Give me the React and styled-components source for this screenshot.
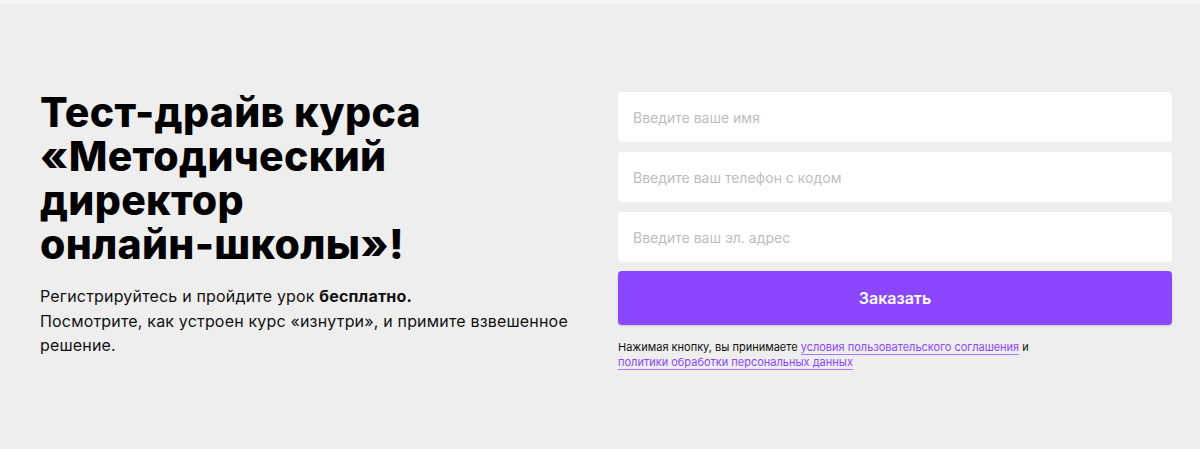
import styled, { createGlobalStyle } from 'styled-components';

const Global = createGlobalStyle`
    body {
        margin: 0;
        background: #eeeeee;
        font-family: Inter, "Noto Sans", sans-serif;
    }
`

const TopStrip = styled.div`
    height: 4px;
    background: #f6f6f6;
`

const Section = styled.section`
    display: grid;
    grid-template-columns: 1fr 554px;
    column-gap: 38px;
    align-items: start;
    padding: 86px 28px 78px 40px;
    background: #eeeeee;
`

const Intro = styled.div``

const Heading = styled.h1`
    margin: 0 0 18px;
    font-size: 41px;
    line-height: 44px;
    font-weight: 800;
    color: #000;
    letter-spacing: 0.3px;
`

const Lead = styled.p`
    margin: 0;
    font-size: 16px;
    line-height: 24.5px;
    letter-spacing: 0.18px;
    color: #111;
    b {
        font-weight: 700;
    }
`

const Form = styled.form`
    display: flex;
    flex-direction: column;
    gap: 10px;
    padding-top: 2px;
`

const Input = styled.input`
    box-sizing: border-box;
    height: 50px;
    width: 100%;
    border: none;
    border-radius: 4px;
    background: #fff;
    padding: 0 15px;
    font-family: inherit;
    font-size: 14px;
    color: #222;
    outline: none;
    &::placeholder {
        color: #bdbdbd;
    }
`

const Button = styled.button`
    height: 54px;
    margin-top: -1px;
    border: none;
    border-radius: 4px;
    background: #8b47ff;
    color: #fff;
    font-family: inherit;
    font-size: 16px;
    font-weight: 600;
    box-shadow: 0 1px 2px rgba(0, 0, 0, 0.15);
    cursor: pointer;
`

const Note = styled.p`
    margin: 5px 0 0;
    font-size: 11px;
    line-height: 15px;
    color: #111;
`

const Link = styled.a`
    color: #8b47ff;
    text-decoration: none;
    border-bottom: 1px solid #a77bff;
`

function App() {
    return (
        <>
            <Global />
            <TopStrip />
            <Section>
                <Intro>
                    <Heading>
                        Тест-драйв курса<br />
                        «Методический<br />
                        директор<br />
                        онлайн-школы»!
                    </Heading>
                    <Lead>
                        Регистрируйтесь и пройдите урок <b>бесплатно.</b><br />
                        Посмотрите, как устроен курс «изнутри», и примите взвешенное решение.
                    </Lead>
                </Intro>
                <Form onSubmit={(e) => e.preventDefault()}>
                    <Input placeholder="Введите ваше имя" />
                    <Input placeholder="Введите ваш телефон с кодом" />
                    <Input placeholder="Введите ваш эл. адрес" />
                    <Button type="submit">Заказать</Button>
                    <Note>
                        Нажимая кнопку, вы принимаете <Link href="#">условия пользовательского соглашения</Link> и<br />
                        <Link href="#">политики обработки персональных данных</Link>
                    </Note>
                </Form>
            </Section>
        </>
    )
}

export default App;
